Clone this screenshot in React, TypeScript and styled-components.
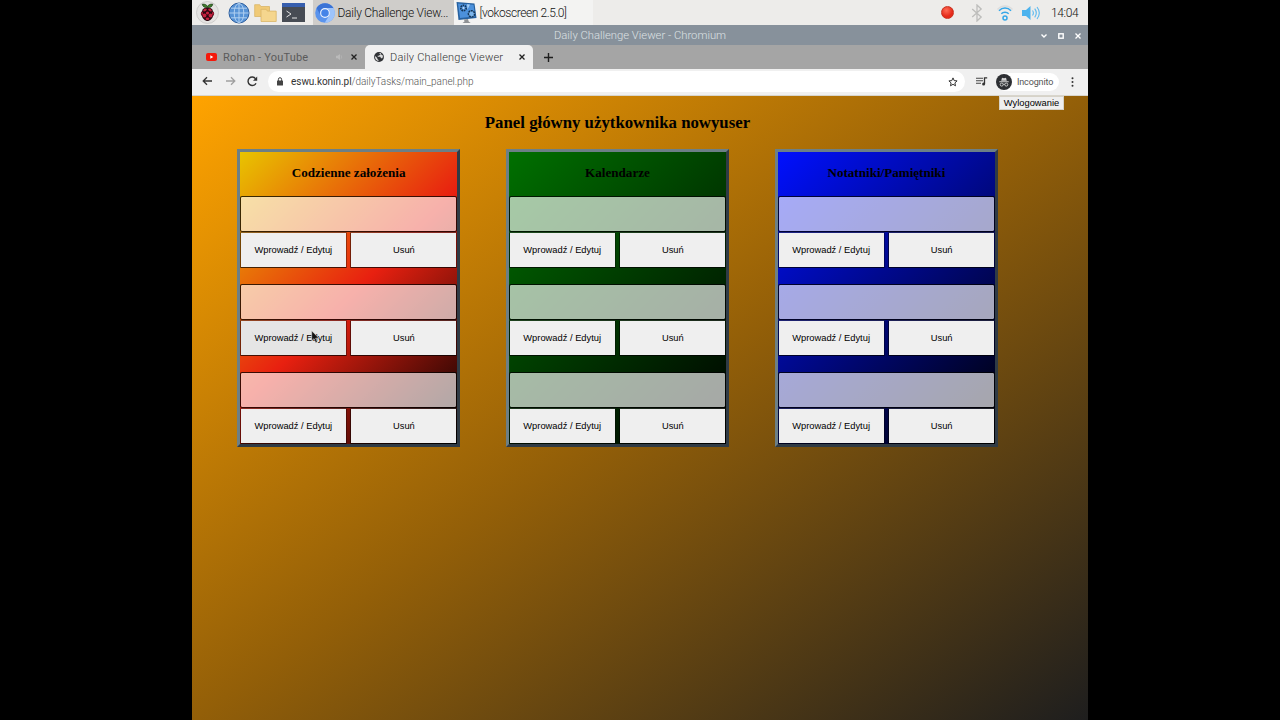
import React from "react";
import styled, { createGlobalStyle } from "styled-components";

const GlobalStyle = createGlobalStyle`
  * { box-sizing: border-box; }
  body { margin: 0; background: #000; overflow: hidden; }
`;

const Desktop = styled.div`
  position: relative;
  width: 896px;
  height: 720px;
  margin: 0 auto;
  display: flex;
  flex-direction: column;
  overflow: hidden;
  font-family: Roboto, "Liberation Sans", sans-serif;
  color: #222;
  svg { display: block; flex: none; }
`;

const Taskbar = styled.header`
  height: 25px;
  flex: none;
  display: flex;
  align-items: center;
  background: #edecea;
`;

const Launchers = styled.div`
  width: 121px;
  height: 25px;
  padding-left: 4px;
  display: flex;
  align-items: center;
  gap: 4.5px;
  svg:first-child { margin-right: 4px; }
`;

const Task = styled.div<{ $active?: boolean; $width: number }>`
  width: ${(p) => p.$width}px;
  height: 25px;
  padding-left: 2px;
  display: flex;
  align-items: center;
  gap: 2px;
  background: ${(p) => (p.$active ? "#cfcdca" : "#f3f3f2")};
`;

const TaskLabel = styled.span<{ $spacing: number }>`
  margin-left: 0.5px;
  padding-top: 1px;
  font-size: 12px;
  font-weight: 300;
  line-height: 25px;
  letter-spacing: ${(p) => p.$spacing}px;
  color: #111;
  white-space: nowrap;
`;

const Tray = styled.div`
  margin-left: auto;
  height: 25px;
  padding-right: 9px;
  display: flex;
  align-items: center;
`;

const RecordDot = styled.div`
  width: 13px;
  height: 13px;
  margin-right: 17px;
  border-radius: 50%;
  border: 1px solid #c8321f;
  background: radial-gradient(circle at 40% 30%, #ff6c56, #e52a1a 60%);
`;

const WifiSlot = styled.div`
  margin: 0 7px 0 13px;
`;

const Clock = styled.span`
  width: 28px;
  margin-left: 10px;
  padding-top: 1px;
  font-size: 12px;
  font-weight: 300;
  letter-spacing: -0.35px;
  color: #111;
  white-space: nowrap;
`;

const TitleBar = styled.div`
  height: 20px;
  flex: none;
  display: grid;
  grid-template-columns: 60px 1fr 60px;
  align-items: center;
  background: #87919b;
  color: #dde1e4;
`;

const WindowTitle = styled.div`
  grid-column: 2;
  padding-top: 1px;
  text-align: center;
  font-size: 11.25px;
  font-weight: 300;
  line-height: 20px;
`;

const WindowButtons = styled.div`
  padding: 0 7px 0 13px;
  display: flex;
  justify-content: space-between;
`;

const TabStrip = styled.div`
  height: 24px;
  flex: none;
  display: flex;
  align-items: center;
  background: #a5a5a5;
`;

const Tab = styled.div<{ $active?: boolean; $width: number; $left: number }>`
  width: ${(p) => p.$width}px;
  height: 24px;
  padding: 0 8px 0 ${(p) => p.$left}px;
  display: flex;
  align-items: center;
  border-radius: 5px 5px 0 0;
  background: ${(p) => (p.$active ? "#f0f0f0" : "transparent")};
`;

const TabTitle = styled.span<{ $muted?: boolean }>`
  flex: 1;
  margin-left: 6px;
  font-size: 11px;
  font-weight: ${(p) => (p.$muted ? 400 : 300)};
  letter-spacing: 0.2px;
  color: ${(p) => (p.$muted ? "#5a5a5a" : "#333")};
  white-space: nowrap;
`;

const MuteSlot = styled.div`
  margin-right: 8px;
`;

const NewTab = styled.div`
  padding-left: 11px;
`;

const Toolbar = styled.div`
  height: 27px;
  flex: none;
  padding: 0 10px 1px;
  display: flex;
  align-items: center;
  background: #f0f0f0;
  border-bottom: 1px solid #d8d5cc;
`;

const NavButtons = styled.div`
  width: 66px;
  display: flex;
  gap: 11.5px;
`;

const AddressBar = styled.div`
  width: 697px;
  height: 21px;
  padding: 0 7px 0 8px;
  display: flex;
  align-items: center;
  border-radius: 11px;
  background: #fff;
`;

const Url = styled.span`
  flex: 1;
  margin-left: 7px;
  font-size: 10px;
  font-weight: 300;
  letter-spacing: -0.04px;
  color: #555;
  b { font-weight: 400; color: #333; }
`;

const ToolbarEnd = styled.div`
  flex: 1;
  padding-left: 11px;
  display: flex;
  align-items: center;
`;

const IncognitoPill = styled.div`
  width: 63px;
  height: 18px;
  margin: 0 12px 0 8px;
  display: flex;
  align-items: center;
  gap: 5px;
  border-radius: 9px;
  background: #fff;
  font-size: 9px;
  letter-spacing: -0.15px;
  color: #555;
`;

const Page = styled.main`
  flex: 1;
  display: flex;
  flex-direction: column;
  background: linear-gradient(to bottom right, #ffa300, #935f08 50%, #1e1e1e);
`;

const Logout = styled.button`
  align-self: flex-end;
  width: 65px;
  height: 14px;
  margin: 0 24px 0 0;
  padding: 0;
  border: 1px solid #d6d2c8;
  background: #efefef;
  font: 9.33px/12px "Liberation Sans", Arial, sans-serif;
  color: #000;
`;

const Heading = styled.h1`
  width: 851px;
  height: 39px;
  margin: 0;
  padding-top: 3px;
  text-align: center;
  font: bold 16.8px/20px "Liberation Serif", "Times New Roman", serif;
  color: #000;
`;

const Cards = styled.div`
  display: flex;
  gap: 45.3px;
  padding-left: 44.8px;
`;

const Card = styled.section<{ $gradient: string }>`
  width: 223.6px;
  height: 298px;
  border: 3px solid;
  border-color: #6c7f86 #303b45 #303b45 #6c7f86;
  background: ${(p) => p.$gradient} padding-box;
`;

const CardTitle = styled.h2`
  height: 44px;
  margin: 0;
  text-align: center;
  font: bold 13.1px/41px "Liberation Serif", "Times New Roman", serif;
  color: #000;
`;

const Entry = styled.div`
  display: grid;
  grid-template-columns: 1fr 1fr;
  grid-template-rows: 36px 36px;
  column-gap: 3.6px;
  & + & { margin-top: 16px; }
`;

const Field = styled.input`
  grid-column: 1 / 3;
  width: 100%;
  height: 36px;
  margin: 0;
  padding: 0 4px;
  border: 1px solid rgba(0, 0, 0, 0.75);
  border-radius: 2px;
  background: rgba(255, 255, 255, 0.65) padding-box;
  outline: none;
`;

const Action = styled.button<{ $hover?: boolean }>`
  height: 36px;
  margin: 0;
  padding: 0 0 1px;
  border: 1px solid;
  border-color: rgba(60, 60, 60, 0.5) rgba(0, 0, 0, 0.35) rgba(0, 0, 0, 0.7) rgba(0, 0, 0, 0.5);
  border-radius: 1px;
  background: ${(p) => (p.$hover ? "#e5e5e5" : "#efefef")} padding-box;
  font: 9.33px "Liberation Sans", Arial, sans-serif;
  color: #000;
`;

const Cursor = styled.svg`
  position: absolute;
  left: 119px;
  top: 330px;
`;

const Raspberry = () => (
  <svg width="23" height="23" viewBox="0 0 23 23">
    <circle cx="11.5" cy="11.5" r="11" fill="#e4e3e1" stroke="#c3c2c0" strokeWidth=".7" />
    <path d="M11.5 6.8C9 7 6.5 5.600 6.200 3.200c2.600-.5 4.600.6 5.300 2.400.7-1.800 2.700-2.900 5.300-2.400-.3 2.400-2.800 3.800-5.300 3.600z" fill="#3f7d2c" stroke="#173313" strokeWidth=".6" />
    <path d="M11.500 6.600c3 0 5.300 1.300 5.400 3.600 1.700 1.200 1.700 3.800.1 4.900-.5 2.700-3.300 5-5.500 5s-5-2.300-5.500-5c-1.600-1.100-1.600-3.700.1-4.900.1-2.300 2.400-3.600 5.400-3.600z" fill="#2c0710" />
    <g fill="#c5223f">
      <ellipse cx="9" cy="9" rx="1.900" ry="1.200" transform="rotate(-28 9 9)" />
      <ellipse cx="14" cy="9" rx="1.900" ry="1.200" transform="rotate(28 14 9)" />
      <circle cx="11.500" cy="12" r="1.600" />
      <circle cx="8.500" cy="14.500" r="1.900" />
      <circle cx="14.500" cy="14.500" r="1.900" />
      <ellipse cx="6.100" cy="12.400" rx=".8" ry="1.600" />
      <ellipse cx="16.900" cy="12.400" rx=".8" ry="1.600" />
      <ellipse cx="11.500" cy="17.700" rx="1.800" ry="1.200" />
    </g>
  </svg>
);

const Globe = () => (
  <svg width="22" height="22" viewBox="0 0 22 22">
    <circle cx="11" cy="11" r="10" fill="#5793d6" stroke="#2e5f9f" strokeWidth="1" />
    <g fill="none" stroke="#b9d6f4" strokeWidth=".9">
      <ellipse cx="11" cy="11" rx="4.800" ry="9.600" />
      <path d="M11 1.400v19.200M1.400 11h19.200M3 6.200h16M3 15.800h16" />
    </g>
  </svg>
);

const Folders = () => (
  <svg width="23" height="20" viewBox="0 0 23 20">
    <path d="M.7 13.500V1.700h5l1.200 1.800h8.600v10z" fill="#f0ca77" stroke="#d9b567" strokeWidth=".8" />
    <path d="M7 18.500V6.300h5.200l1.200 1.800h8.800v10.400z" fill="#f5d68e" stroke="#d9b567" strokeWidth=".8" />
  </svg>
);

const Terminal = () => (
  <svg width="23" height="19" viewBox="0 0 23 19">
    <rect width="23" height="19" fill="#474c54" />
    <rect width="23" height="4" fill="#375fae" />
    <path d="M4.500 8l4.500 3-4.500 3M10 15h5" fill="none" stroke="#e5e5e5" strokeWidth="1" />
  </svg>
);

const Chromium = () => (
  <svg width="20" height="20" viewBox="0 0 20 20">
    <circle cx="10" cy="10" r="9.800" fill="#5a94ed" />
    <path d="M1.500 5.100A9.800 9.800 0 0 1 18.500 5.100H10a4.900 4.900 0 0 0-4.500 6.800z" fill="#3a73d6" />
    <path d="M18.500 5.100A9.800 9.800 0 0 1 9.700 19.800l4.500-7.400A4.900 4.900 0 0 0 10 5.100z" fill="#9ec4fb" />
    <circle cx="10" cy="10" r="4.900" fill="#eef4fd" />
    <circle cx="10" cy="10" r="3.800" fill="#4584e8" />
  </svg>
);

const Vokoscreen = () => (
  <svg width="21" height="23" viewBox="0 0 21 23">
    <path d="M.5 1l18 1.500 2 14.500L2.500 19z" fill="#27619f" />
    <path d="M2 2.500l15.500 1.300L19 15.600 4 17z" fill="#4c91dc" />
    <circle cx="7.500" cy="7" r="2.700" fill="none" stroke="#143455" strokeWidth="1.600" strokeDasharray="1.600 .7" />
    <circle cx="7.500" cy="7" r="1" fill="#c5dcf2" />
    <circle cx="15.500" cy="12.800" r="3.100" fill="#7db6ec" stroke="#143455" strokeWidth="1.500" strokeDasharray="2 .7" />
    <path d="M11 3.300l3 .2-2.500 5z" fill="#a4cdf5" />
    <path d="M8 18.500l4-.4.700 2.400 2 1.500H6.500l2-1.500z" fill="#8f9295" />
  </svg>
);

const Bluetooth = () => (
  <svg width="12" height="18" viewBox="0 0 12 18" fill="none" stroke="#bdbdbb" strokeWidth="1.300">
    <path d="M1.200 5l9 8L6 17V1l4.200 4-9 8" />
  </svg>
);

const Wifi = () => (
  <svg width="18" height="18" viewBox="0 0 18 18" fill="none" strokeWidth="1.500">
    <path d="M1.500 5.500C5.500.800 12.500.800 16.500 5.500" stroke="#dcdcdc" />
    <path d="M3 6.700c3.300-3.500 8.700-3.500 12 0M5.300 9.700c2-2 5.400-2 7.400 0" stroke="#35a7e8" />
    <circle cx="9" cy="14" r="2" stroke="#35a7e8" />
  </svg>
);

const Volume = () => (
  <svg width="20" height="16" viewBox="0 0 20 16">
    <path d="M1 5h4l4.500-4v14L5 11H1z" fill="#4cb3ee" />
    <g fill="none" stroke="#5bb9ef" strokeWidth="1.100">
      <path d="M11.500 5.500q1.800 2.500 0 5M13.700 3.700q3.200 4.300 0 8.600M16 2q4.600 6 0 12" />
    </g>
  </svg>
);

const Close = ({ color = "#222" }: { color?: string }) => (
  <svg width="6" height="6" viewBox="0 0 6 6" stroke={color} strokeWidth="1.300">
    <path d="M.5.5l5 5M5.500.5l-5 5" />
  </svg>
);

const Minimize = () => (
  <svg width="6" height="6" viewBox="0 0 6 6" fill="none" stroke="#fff" strokeWidth="1.400">
    <path d="M.5 1.500L3 4l2.500-2.500" />
  </svg>
);

const Maximize = () => (
  <svg width="6" height="6" viewBox="0 0 6 6" fill="none" stroke="#fff" strokeWidth="1.400">
    <rect x=".8" y=".8" width="4.400" height="4.400" />
  </svg>
);

const YouTube = () => (
  <svg width="11" height="8" viewBox="0 0 11 8">
    <rect width="11" height="8" rx="2" fill="#f5190b" />
    <path d="M4.300 2.300v3.400L7.300 4z" fill="#fff" />
  </svg>
);

const Speaker = () => (
  <svg width="7" height="8" viewBox="0 0 7 8">
    <path d="M0 2.800h1.600L4 1v6L1.600 5.200H0z" fill="#bababa" />
    <path d="M5 2.200q1.500 1.800 0 3.600" fill="none" stroke="#b5b5b5" strokeWidth=".8" />
  </svg>
);

const SiteIcon = () => (
  <svg width="10" height="10" viewBox="0 0 10 10">
    <circle cx="5" cy="5" r="4.900" fill="#303236" />
    <path d="M1 4.100l2.300 2v.8l1.200 1v1.200C2.200 8.800.800 6.800 1 4.100zM4.700 1h2.200v.9l-1.200 1-.8.900H3.700v1h2.600l.7 1.400h1.200C9 5.400 9.100 4.400 8.600 3.300" fill="#dedede" />
  </svg>
);

const Plus = () => (
  <svg width="9" height="9" viewBox="0 0 9 9" stroke="#1e1e1e" strokeWidth="1.400">
    <path d="M4.500 0v9M0 4.500h9" />
  </svg>
);

const Arrow = ({ back }: { back?: boolean }) => (
  <svg width="11" height="10" viewBox="0 0 11 10" fill="none" stroke={back ? "#333" : "#a0a0a0"} strokeWidth="1.300">
    <path d={back ? "M10 5H1.500M5 1.200L1.200 5 5 8.800" : "M1 5H9.500M6 1.200L9.800 5 6 8.800"} />
  </svg>
);

const Reload = () => (
  <svg width="11" height="11" viewBox="0 0 11 11">
    <path d="M9 7.200A4.200 4.200 0 1 1 8.600 2.700" fill="none" stroke="#333" strokeWidth="1.400" />
    <path d="M10.200.6v4.200H6z" fill="#333" />
  </svg>
);

const Lock = () => (
  <svg width="8" height="9" viewBox="0 0 8 9">
    <rect x="1" y="3.500" width="6" height="5" rx=".6" fill="#444" />
    <path d="M2.400 4V2.300a1.600 1.600 0 0 1 3.200 0V4" fill="none" stroke="#444" strokeWidth="1" />
  </svg>
);

const Star = () => (
  <svg width="10" height="10" viewBox="0 0 10 10" fill="none" stroke="#333" strokeWidth="1">
    <path d="M5 .9l1.200 2.700 2.900.3-2.200 2 .6 2.900L5 7.300 2.500 8.800l.6-2.900-2.200-2 2.900-.3z" />
  </svg>
);

const Playlist = () => (
  <svg width="12" height="9" viewBox="0 0 12 9">
    <path d="M0 1.200h7M0 3.700h7M0 6.200h5" stroke="#444" strokeWidth="1.100" />
    <path d="M8.500 7V.9h2.700" fill="none" stroke="#333" strokeWidth="1.300" />
    <circle cx="7.600" cy="7.100" r="1.500" fill="#333" />
  </svg>
);

const Incognito = () => (
  <svg width="16" height="16" viewBox="0 0 16 16">
    <circle cx="8" cy="8" r="8" fill="#2d2f33" />
    <path d="M5.200 6.700L6 3.800l2 .5 2-.5.8 2.900zM3.300 7.300h9.400v.9H3.300z" fill="#d4d4d4" />
    <g fill="none" stroke="#d4d4d4" strokeWidth=".9">
      <circle cx="5.700" cy="10.600" r="1.500" />
      <circle cx="10.300" cy="10.600" r="1.500" />
      <path d="M7.200 10.400q.8-.5 1.600 0" />
    </g>
  </svg>
);

const Menu = () => (
  <svg width="3" height="10" viewBox="0 0 3 10" fill="#333">
    <circle cx="1.500" cy="1.200" r="1" />
    <circle cx="1.500" cy="5" r="1" />
    <circle cx="1.500" cy="8.800" r="1" />
  </svg>
);

const panels = [
  { title: "Codzienne założenia", gradient: "linear-gradient(135deg, #e8c400, #e82010 50%, #000)" },
  { title: "Kalendarze", gradient: "linear-gradient(135deg, #007000, #000)" },
  { title: "Notatniki/Pamiętniki", gradient: "linear-gradient(135deg, #0010ff, #000)" },
];

export default function App() {
  return (
    <>
      <GlobalStyle />
      <Desktop>
        <Taskbar>
          <Launchers>
            <Raspberry />
            <Globe />
            <Folders />
            <Terminal />
          </Launchers>
          <Task $active $width={141}>
            <Chromium />
            <TaskLabel $spacing={-0.25}>Daily Challenge View...</TaskLabel>
          </Task>
          <Task $width={139}>
            <Vokoscreen />
            <TaskLabel $spacing={-0.42}>[vokoscreen 2.5.0]</TaskLabel>
          </Task>
          <Tray>
            <RecordDot />
            <Bluetooth />
            <WifiSlot>
              <Wifi />
            </WifiSlot>
            <Volume />
            <Clock>14:04</Clock>
          </Tray>
        </Taskbar>

        <TitleBar>
          <WindowTitle>Daily Challenge Viewer - Chromium</WindowTitle>
          <WindowButtons>
            <Minimize />
            <Maximize />
            <Close color="#fff" />
          </WindowButtons>
        </TitleBar>

        <TabStrip>
          <Tab $width={173} $left={14}>
            <YouTube />
            <TabTitle $muted>Rohan - YouTube</TabTitle>
            <MuteSlot>
              <Speaker />
            </MuteSlot>
            <Close />
          </Tab>
          <Tab $active $width={168} $left={9}>
            <SiteIcon />
            <TabTitle>Daily Challenge Viewer</TabTitle>
            <Close />
          </Tab>
          <NewTab>
            <Plus />
          </NewTab>
        </TabStrip>

        <Toolbar>
          <NavButtons>
            <Arrow back />
            <Arrow />
            <Reload />
          </NavButtons>
          <AddressBar>
            <Lock />
            <Url>
              <b>eswu.konin.pl</b>/dailyTasks/main_panel.php
            </Url>
            <Star />
          </AddressBar>
          <ToolbarEnd>
            <Playlist />
            <IncognitoPill>
              <Incognito />
              Incognito
            </IncognitoPill>
            <Menu />
          </ToolbarEnd>
        </Toolbar>

        <Page>
          <Logout>Wylogowanie</Logout>
          <Heading>Panel główny użytkownika nowyuser</Heading>
          <Cards>
            {panels.map((panel, column) => (
              <Card key={panel.title} $gradient={panel.gradient}>
                <CardTitle>{panel.title}</CardTitle>
                {[0, 1, 2].map((row) => (
                  <Entry key={row}>
                    <Field readOnly />
                    <Action $hover={column === 0 && row === 1}>Wprowadź / Edytuj</Action>
                    <Action>Usuń</Action>
                  </Entry>
                ))}
              </Card>
            ))}
          </Cards>
        </Page>

        <Cursor width="9" height="14" viewBox="0 0 9 14">
          <path d="M.7.800v10l2.300-2.100 1.700 4 1.700-.8-1.700-3.700h3.200z" fill="#111" stroke="#ddd" strokeWidth=".6" />
        </Cursor>
      </Desktop>
    </>
  );
}
